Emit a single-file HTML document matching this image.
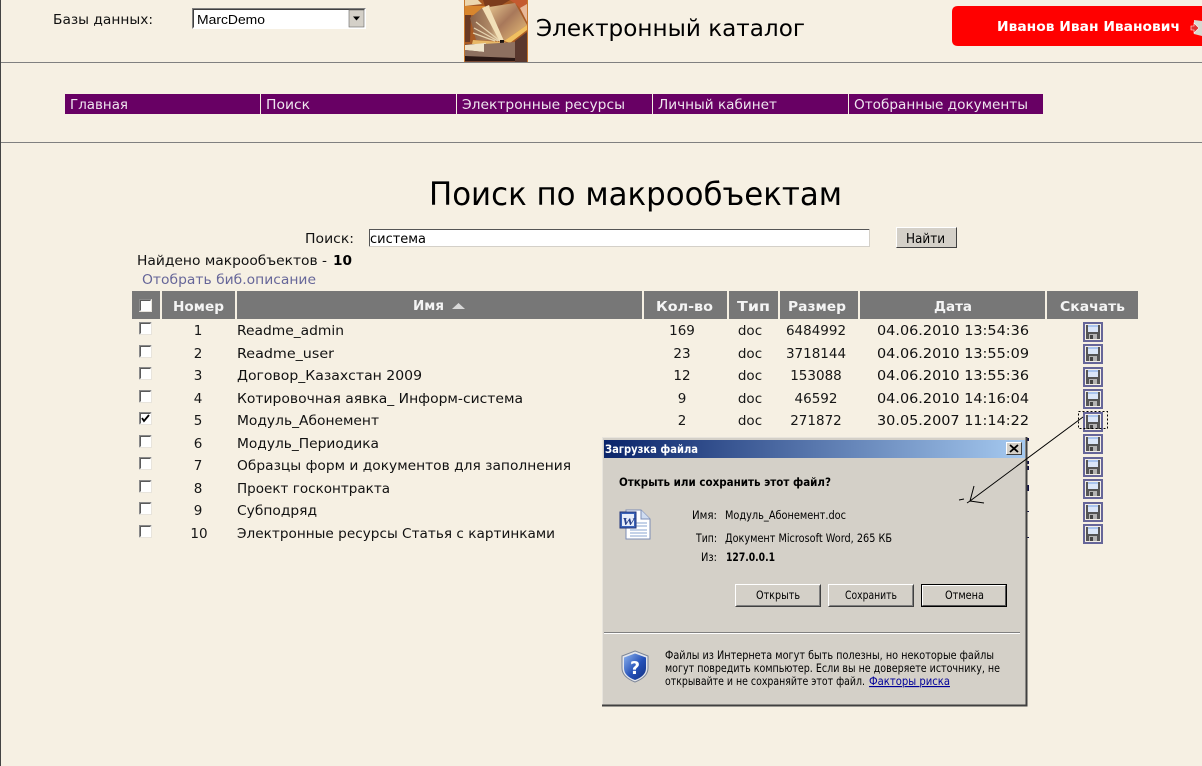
<!DOCTYPE html>
<html lang="ru"><head><meta charset="utf-8"><title>Поиск по макрообъектам</title>
<style>
html,body{margin:0;padding:0;background:#f6f0e3;width:1202px;height:766px;overflow:hidden}
svg{display:block}
text{font-family:"DejaVu Sans","Liberation Sans",sans-serif;white-space:pre}
.t{font-size:13.5px;fill:#111}
.c{font-size:13.5px;fill:#161616;text-anchor:middle}
.h{font-size:13.5px;font-weight:bold;fill:#f4f4f4}
.n{font-size:13.5px;fill:#efe6ef}
.d{font-size:11.5px;fill:#000}
</style></head><body>
<svg xmlns="http://www.w3.org/2000/svg" width="1202" height="766" viewBox="0 0 1202 766">
<defs>
<linearGradient id="tb" x1="0" x2="1" y1="0" y2="0"><stop offset="0" stop-color="#0a246a"/><stop offset="1" stop-color="#a6caf0"/></linearGradient>
<linearGradient id="sh" x1="0" x2="1" y1="0" y2="1"><stop offset="0" stop-color="#8fb4ee"/><stop offset=".55" stop-color="#2450b8"/><stop offset="1" stop-color="#123080"/></linearGradient>
<linearGradient id="pg" x1="0" x2="1" y1="0" y2="0"><stop offset="0" stop-color="#8a6248"/><stop offset=".7" stop-color="#b08a68"/><stop offset="1" stop-color="#e8d0a0"/></linearGradient>
<linearGradient id="pg2" x1="0" x2="1" y1="0" y2="1"><stop offset="0" stop-color="#e8c890"/><stop offset=".45" stop-color="#a8785a"/><stop offset="1" stop-color="#edc47a"/></linearGradient>
<symbol id="fl" viewBox="0 0 20 20">
<rect x="0" y="0" width="20" height="20" fill="#666699"/>
<rect x="2" y="2" width="16" height="16" fill="#f3efe6"/>
<path d="M3 3H17V17H3Z" fill="#555"/>
<rect x="5" y="3" width="10" height="7" fill="#dbe6f8"/>
<rect x="5" y="3" width="10" height="2" fill="#a9c4ee"/>
<rect x="6" y="12" width="8" height="5" fill="#b4b4b4"/>
<rect x="7" y="13" width="3" height="4" fill="#444"/>
</symbol>
<symbol id="cb" viewBox="0 0 13 13">
<rect x="0" y="0" width="13" height="13" fill="#fff"/>
<path d="M.5 12.5V.5H12.5" fill="none" stroke="#8a8a8a"/>
<path d="M1.5 11.5V1.5H11.5" fill="none" stroke="#5a5a5a"/>
<path d="M.5 12.5H12.5V.5" fill="none" stroke="#e8e4dc"/>
</symbol>
</defs>

<!-- page frame -->
<rect x="0" y="0" width="1" height="766" fill="#444"/>
<rect x="1" y="62" width="1201" height="1" fill="#808080"/>
<rect x="1" y="142" width="1201" height="1" fill="#808080"/>

<!-- database selector -->
<text class="t" x="53" y="24" textLength="100" lengthAdjust="spacingAndGlyphs">Базы данных:</text>
<rect x="192" y="8" width="174" height="21" fill="#fff"/>
<path d="M192.5 28.5V8.5H365.5" fill="none" stroke="#808080"/>
<path d="M193.5 27.5V9.5H364.5" fill="none" stroke="#404040"/>
<rect x="349" y="10" width="15" height="17" fill="#d4d0c8" stroke="#666" stroke-width=".6"/>
<path d="M353 16.5H360L356.5 20.5Z" fill="#000"/>
<text x="197" y="24" style="font-family:'Liberation Sans',sans-serif;font-size:13px;fill:#000" textLength="68" lengthAdjust="spacingAndGlyphs">MarcDemo</text>

<!-- logo picture -->
<rect x="464" y="0" width="64" height="62" fill="#c8782c"/>
<rect x="465" y="0" width="62" height="62" fill="#a85a24"/>
<path d="M465 0H478L482 4L465 6Z" fill="#ecd6ae"/>
<path d="M465 6H486L478 15H465Z" fill="#d8862e"/>
<path d="M483 0H510L497 8L486 10Z" fill="#7c3c1c"/>
<path d="M510 0H527V18L518 6Z" fill="#c45a30"/>
<path d="M465 15H471L470 42H465Z" fill="#6a3a24"/>
<path d="M520 8L527 4V22Z" fill="#e8b898"/>
<path d="M470 18L482 8L500 41L476 40Z" fill="url(#pg)"/>
<path d="M476 22L500 41M474 28L498 41M473 33L495 41" stroke="#e6d4b0" stroke-width="1.2" fill="none"/>
<path d="M482 8L489 5L504 40L500 42Z" fill="#f2e0b8"/>
<path d="M489 7L515 3L527 25L504 41Z" fill="url(#pg2)"/>
<path d="M504 41L527 25V30L510 43Z" fill="#f0c060"/>
<path d="M473 40L503 42L509 43L500 44H472Z" fill="#e8b868"/>
<rect x="500" y="40" width="4" height="3" fill="#1c1410"/>
<rect x="465" y="44" width="62" height="18" fill="#7a4a34"/>
<path d="M465 45L486 43L484 52L465 50Z" fill="#efe4cc"/>
<path d="M484 44L515 42V58L465 57V50L484 52Z" fill="#8e7060"/>
<path d="M465 56L515 58V61H465Z" fill="#2a1714"/>
<path d="M515 41L527 32V62H515Z" fill="#5a382e"/>

<text x="536" y="36" style="font-size:23.5px;fill:#000" textLength="269" lengthAdjust="spacingAndGlyphs">Электронный каталог</text>

<!-- user badge -->
<path d="M958 6H1202V46H958Q952 46 952 40V12Q952 6 958 6Z" fill="#ff0000"/>
<text x="997" y="31" style="font-size:13.5px;font-weight:bold;fill:#fff" textLength="183" lengthAdjust="spacingAndGlyphs">Иванов Иван Иванович</text>
<path d="M1194 20L1202 21V36L1194 34Z" fill="#d8d8d0"/>
<path d="M1191 26H1194V23L1199 28L1194 33V30H1191Z" fill="#e03030" stroke="#fff" stroke-width=".6"/>

<!-- navigation -->
<g fill="#680064">
<rect x="65" y="94" width="195" height="20"/><rect x="261" y="94" width="195" height="20"/><rect x="457" y="94" width="195" height="20"/><rect x="653" y="94" width="195" height="20"/><rect x="849" y="94" width="194" height="20"/>
</g>
<text class="n" x="70" y="109" textLength="58" lengthAdjust="spacingAndGlyphs">Главная</text>
<text class="n" x="266" y="109" textLength="44" lengthAdjust="spacingAndGlyphs">Поиск</text>
<text class="n" x="462" y="109" textLength="163" lengthAdjust="spacingAndGlyphs">Электронные ресурсы</text>
<text class="n" x="658" y="109" textLength="119" lengthAdjust="spacingAndGlyphs">Личный кабинет</text>
<text class="n" x="854" y="109" textLength="174" lengthAdjust="spacingAndGlyphs">Отобранные документы</text>

<!-- heading and search -->
<text x="429" y="205" style="font-size:32px;fill:#000" textLength="413" lengthAdjust="spacingAndGlyphs">Поиск по макрообъектам</text>
<text class="t" x="305" y="243" textLength="49" lengthAdjust="spacingAndGlyphs">Поиск:</text>
<rect x="369" y="229" width="501" height="18" fill="#fff"/>
<path d="M369.5 246.5V229.5H869.5" fill="none" stroke="#555"/>
<path d="M369.5 246.5H869.5V229.5" fill="none" stroke="#d4d0c8"/>
<text x="370" y="243" style="font-size:13px;fill:#000" textLength="56" lengthAdjust="spacingAndGlyphs">система</text>
<rect x="896" y="227" width="61" height="21" fill="#d4d0c8"/>
<path d="M896.5 247.5V227.5H956.5" fill="none" stroke="#fff"/>
<path d="M896.5 247.5H956.5V227.5" fill="none" stroke="#404040"/>
<text x="906" y="243" style="font-size:13px;fill:#000" textLength="39" lengthAdjust="spacingAndGlyphs">Найти</text>

<text class="t" x="137" y="265" textLength="190" lengthAdjust="spacingAndGlyphs">Найдено макрообъектов -</text>
<text x="333" y="265" style="font-size:13.5px;font-weight:bold;fill:#000" textLength="19" lengthAdjust="spacingAndGlyphs">10</text>
<text x="142" y="284" style="font-size:13.5px;fill:#666699" textLength="174" lengthAdjust="spacingAndGlyphs">Отобрать биб.описание</text>

<!-- table header -->
<g fill="#777777">
<rect x="132" y="291" width="28" height="28"/><rect x="162" y="291" width="73" height="28"/><rect x="237" y="291" width="405" height="28"/><rect x="644" y="291" width="83" height="28"/><rect x="729" y="291" width="49" height="28"/><rect x="780" y="291" width="78" height="28"/><rect x="860" y="291" width="185" height="28"/><rect x="1047" y="291" width="91" height="28"/>
</g>
<use href="#cb" x="139" y="299" width="13" height="13"/>
<text class="h" x="173" y="311" textLength="51" lengthAdjust="spacingAndGlyphs">Номер</text>
<text class="h" x="413" y="310" textLength="31" lengthAdjust="spacingAndGlyphs">Имя</text>
<path d="M452 309L458.500 303L465 309Z" fill="#d8d8d8"/>
<text class="h" x="656" y="311" textLength="57" lengthAdjust="spacingAndGlyphs">Кол-во</text>
<text class="h" x="737" y="311" textLength="33" lengthAdjust="spacingAndGlyphs">Тип</text>
<text class="h" x="788" y="311" textLength="58" lengthAdjust="spacingAndGlyphs">Размер</text>
<text class="h" x="934" y="311" textLength="38" lengthAdjust="spacingAndGlyphs">Дата</text>
<text class="h" x="1060" y="311" textLength="65" lengthAdjust="spacingAndGlyphs">Скачать</text>

<!-- checkboxes -->
<use href="#cb" x="139" y="322" width="13" height="13"/>
<use href="#cb" x="139" y="345" width="13" height="13"/>
<use href="#cb" x="139" y="367" width="13" height="13"/>
<use href="#cb" x="139" y="390" width="13" height="13"/>
<use href="#cb" x="139" y="412" width="13" height="13"/>
<path d="M142 418L144 421L149 415" fill="none" stroke="#000" stroke-width="1.800"/>
<use href="#cb" x="139" y="435" width="13" height="13"/>
<use href="#cb" x="139" y="457" width="13" height="13"/>
<use href="#cb" x="139" y="480" width="13" height="13"/>
<use href="#cb" x="139" y="502" width="13" height="13"/>
<use href="#cb" x="139" y="525" width="13" height="13"/>

<!-- rows: number + name -->
<g>
<text class="c" x="198" y="335">1</text><text class="t" x="237" y="335" textLength="107" lengthAdjust="spacingAndGlyphs">Readme_admin</text>
<text class="c" x="198" y="358">2</text><text class="t" x="237" y="358" textLength="97" lengthAdjust="spacingAndGlyphs">Readme_user</text>
<text class="c" x="198" y="380">3</text><text class="t" x="237" y="380" textLength="185" lengthAdjust="spacingAndGlyphs">Договор_Казахстан 2009</text>
<text class="c" x="198" y="403">4</text><text class="t" x="237" y="403" textLength="286" lengthAdjust="spacingAndGlyphs">Котировочная аявка_ Информ-система</text>
<text class="c" x="198" y="425">5</text><text class="t" x="237" y="425" textLength="142" lengthAdjust="spacingAndGlyphs">Модуль_Абонемент</text>
<text class="c" x="198" y="448">6</text><text class="t" x="237" y="448" textLength="142" lengthAdjust="spacingAndGlyphs">Модуль_Периодика</text>
<text class="c" x="198" y="470">7</text><text class="t" x="237" y="470" textLength="334" lengthAdjust="spacingAndGlyphs">Образцы форм и документов для заполнения</text>
<text class="c" x="198" y="493">8</text><text class="t" x="237" y="493" textLength="153" lengthAdjust="spacingAndGlyphs">Проект госконтракта</text>
<text class="c" x="198" y="515">9</text><text class="t" x="237" y="515" textLength="80" lengthAdjust="spacingAndGlyphs">Субподряд</text>
<text class="c" x="199" y="538">10</text><text class="t" x="237" y="538" textLength="318" lengthAdjust="spacingAndGlyphs">Электронные ресурсы Статья с картинками</text>
</g>

<!-- rows: data -->
<g>
<text class="c" x="682" y="335">169</text><text class="c" x="750" y="335">doc</text><text class="c" x="816" y="335">6484992</text><text class="t" x="877" y="335" textLength="152" lengthAdjust="spacingAndGlyphs">04.06.2010 13:54:36</text>
<text class="c" x="682" y="358">23</text><text class="c" x="750" y="358">doc</text><text class="c" x="816" y="358">3718144</text><text class="t" x="877" y="358" textLength="152" lengthAdjust="spacingAndGlyphs">04.06.2010 13:55:09</text>
<text class="c" x="682" y="380">12</text><text class="c" x="750" y="380">doc</text><text class="c" x="816" y="380">153088</text><text class="t" x="877" y="380" textLength="152" lengthAdjust="spacingAndGlyphs">04.06.2010 13:55:36</text>
<text class="c" x="682" y="403">9</text><text class="c" x="750" y="403">doc</text><text class="c" x="816" y="403">46592</text><text class="t" x="877" y="403" textLength="152" lengthAdjust="spacingAndGlyphs">04.06.2010 14:16:04</text>
<text class="c" x="682" y="425">2</text><text class="c" x="750" y="425">doc</text><text class="c" x="816" y="425">271872</text><text class="t" x="877" y="425" textLength="152" lengthAdjust="spacingAndGlyphs">30.05.2007 11:14:22</text>
</g>

<!-- download icons -->
<use href="#fl" x="1083" y="322" width="20" height="20"/>
<use href="#fl" x="1083" y="344" width="20" height="20"/>
<use href="#fl" x="1083" y="367" width="20" height="20"/>
<use href="#fl" x="1083" y="389" width="20" height="20"/>
<use href="#fl" x="1083" y="412" width="20" height="20"/>
<use href="#fl" x="1083" y="434" width="20" height="20"/>
<use href="#fl" x="1083" y="457" width="20" height="20"/>
<use href="#fl" x="1083" y="479" width="20" height="20"/>
<use href="#fl" x="1083" y="502" width="20" height="20"/>
<use href="#fl" x="1083" y="524" width="20" height="20"/>
<rect x="1078.500" y="411.500" width="29" height="17" fill="none" stroke="#000" stroke-dasharray="2 2"/>

<!-- dates peeking past the dialog -->
<g fill="#114">
<rect x="1027" y="438" width="2" height="3"/><rect x="1027" y="461" width="2" height="3"/><rect x="1027" y="466" width="2" height="4"/><rect x="1027" y="485" width="2" height="6"/><rect x="1027" y="511" width="2" height="1"/><rect x="1027" y="537" width="2" height="1"/>
</g>

<!-- dialog -->
<rect x="602" y="437" width="425" height="269" fill="#d4d0c8"/>
<path d="M602.500 705.500V437.500H1026.500" fill="none" stroke="#e8e4dc"/>
<path d="M602 705.500H1026.500V437" fill="none" stroke="#404040" stroke-width="2"/>
<rect x="604" y="440" width="421" height="18" fill="url(#tb)"/>
<text x="605" y="453" style="font-size:11.5px;font-weight:bold;fill:#fff" textLength="93" lengthAdjust="spacingAndGlyphs">Загрузка файла</text>
<rect x="1006" y="442" width="16" height="13" fill="#d4d0c8"/>
<path d="M1006.500 454.500V442.500H1021.500" fill="none" stroke="#fff"/>
<path d="M1006.500 454.500H1021.500V442.500" fill="none" stroke="#404040"/>
<path d="M1010 445L1018 452M1018 445L1010 452" stroke="#000" stroke-width="1.800"/>

<text class="d" x="619" y="486" style="font-weight:bold" textLength="212" lengthAdjust="spacingAndGlyphs">Открыть или сохранить этот файл?</text>

<!-- word icon -->
<path d="M626 510H641L650 519V539H626Z" fill="#fff" stroke="#7b8db5"/>
<path d="M641 510V519H650" fill="#cfdcf0" stroke="#7b8db5"/>
<path d="M636 523H647M636 526H647M630 530H647M630 533H647M630 536H647" stroke="#8aa4d0"/>
<rect x="620" y="512" width="16" height="16" fill="#3a62b8" stroke="#23367a"/>
<rect x="622" y="514" width="12" height="12" fill="#e8eefa"/>
<text x="622" y="525" style="font-size:11px;font-weight:bold;font-style:italic;fill:#27408b;font-family:'Liberation Serif',serif" textLength="13" lengthAdjust="spacingAndGlyphs">W</text>

<text class="d" x="692" y="519" textLength="25" lengthAdjust="spacingAndGlyphs">Имя:</text>
<text class="d" x="725" y="519" textLength="121" lengthAdjust="spacingAndGlyphs">Модуль_Абонемент.doc</text>
<text class="d" x="696" y="542" textLength="21" lengthAdjust="spacingAndGlyphs">Тип:</text>
<text class="d" x="725" y="542" textLength="167" lengthAdjust="spacingAndGlyphs">Документ Microsoft Word, 265 КБ</text>
<text class="d" x="701" y="561" textLength="16" lengthAdjust="spacingAndGlyphs">Из:</text>
<text class="d" x="726" y="561" style="font-weight:bold" textLength="49" lengthAdjust="spacingAndGlyphs">127.0.0.1</text>

<!-- dialog buttons -->
<path d="M735.500 606.500V584.500H820.500" fill="none" stroke="#fff"/>
<path d="M735.500 606.500H820.500V584.500" fill="none" stroke="#404040"/>
<path d="M736.500 605.500H819.500V585.500" fill="none" stroke="#808080"/>
<text class="d" x="756" y="599" textLength="44" lengthAdjust="spacingAndGlyphs">Открыть</text>
<path d="M828.500 606.500V584.500H913.500" fill="none" stroke="#fff"/>
<path d="M828.500 606.500H913.500V584.500" fill="none" stroke="#404040"/>
<path d="M829.500 605.500H912.500V585.500" fill="none" stroke="#808080"/>
<text class="d" x="845" y="599" textLength="52" lengthAdjust="spacingAndGlyphs">Сохранить</text>
<rect x="921.500" y="584.500" width="85" height="22" fill="none" stroke="#000"/>
<path d="M922.500 605.500V585.500H1005.500" fill="none" stroke="#fff"/>
<path d="M922.500 605.500H1005.500V585.500" fill="none" stroke="#555"/>
<text class="d" x="945" y="599" textLength="39" lengthAdjust="spacingAndGlyphs">Отмена</text>

<rect x="604" y="632" width="416" height="1" fill="#808080"/>
<rect x="604" y="633" width="416" height="1" fill="#fff"/>

<!-- shield -->
<path d="M635 651L648 656V668Q648 677 635 682Q622 677 622 668V656Z" fill="#e4e6ec" stroke="#7c8698" stroke-width="1"/>
<path d="M635 653.500L646 657.500V668Q646 676 635 680Q624 676 624 668V657.500Z" fill="url(#sh)"/>
<text x="630" y="674" style="font-size:18px;font-weight:bold;fill:#fff" textLength="10" lengthAdjust="spacingAndGlyphs">?</text>

<text class="d" x="665" y="659" textLength="329" lengthAdjust="spacingAndGlyphs">Файлы из Интернета могут быть полезны, но некоторые файлы</text>
<text class="d" x="665" y="672" textLength="335" lengthAdjust="spacingAndGlyphs">могут повредить компьютер. Если вы не доверяете источнику, не</text>
<text class="d" x="665" y="685" textLength="200" lengthAdjust="spacingAndGlyphs">открывайте и не сохраняйте этот файл.</text>
<text x="869" y="685" style="font-size:11.5px;fill:#000099;text-decoration:underline" textLength="81" lengthAdjust="spacingAndGlyphs">Факторы риска</text>

<!-- hand drawn arrow -->
<path d="M1083 417L970 501M970 501L974 486M970 501L984 503M970 501L967 503M959 500L964 499" fill="none" stroke="#000" stroke-width="1"/>
</svg>
</body></html>
